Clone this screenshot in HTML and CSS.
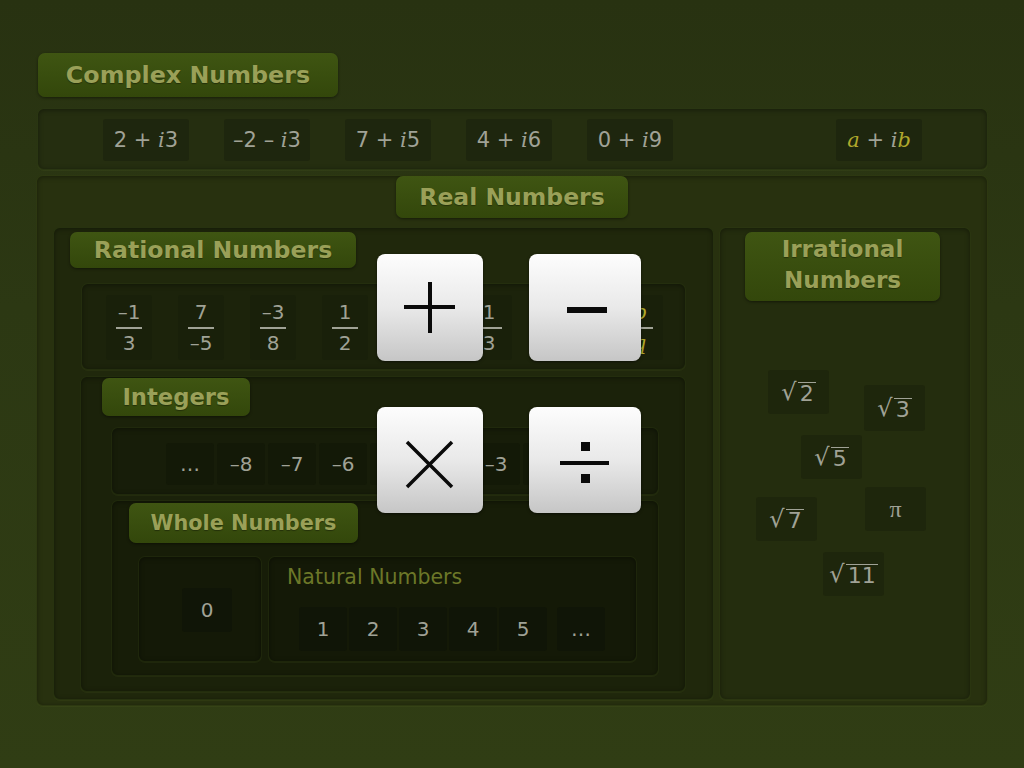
FILE: index.html
```html
<!DOCTYPE html>
<html>
<head>
<meta charset="utf-8">
<link rel="stylesheet" href="styles.css">
</head>
<body>
<div class="page">
  <div class="label label-complex">Complex Numbers</div>
  <div class="panel complex-row">
    <div class="cx">2 + <i>i</i>3</div>
    <div class="cx">–2 – <i>i</i>3</div>
    <div class="cx">7 + <i>i</i>5</div>
    <div class="cx">4 + <i>i</i>6</div>
    <div class="cx">0 + <i>i</i>9</div>
    <div class="cx cx-general"><i class="y">a</i> + <i>i</i><i class="y">b</i></div>
  </div>

  <div class="panel real">
    <div class="label label-real">Real Numbers</div>
    <div class="real-body">
      <div class="panel rational">
        <div class="label label-rational">Rational Numbers</div>
        <div class="panel frac-row">
          <div class="frac"><span>–1</span><b></b><span>3</span></div>
          <div class="frac"><span>7</span><b></b><span>–5</span></div>
          <div class="frac"><span>–3</span><b></b><span>8</span></div>
          <div class="frac"><span>1</span><b></b><span>2</span></div>
          <div class="frac"><span>5</span><b></b><span>4</span></div>
          <div class="frac"><span>1</span><b></b><span>3</span></div>
          <div class="frac"><span>2</span><b></b><span>7</span></div>
          <div class="frac frac-general"><span><i>p</i></span><b></b><span><i>q</i></span></div>
        </div>
        <div class="panel integers">
          <div class="label label-int">Integers</div>
          <div class="panel int-row">
            <div class="num">…</div>
            <div class="num">–8</div>
            <div class="num">–7</div>
            <div class="num">–6</div>
            <div class="num">–5</div>
            <div class="num">–4</div>
            <div class="num">–3</div>
            <div class="num">–2</div>
            <div class="num">–1</div>
          </div>
          <div class="panel whole">
            <div class="label label-whole">Whole Numbers</div>
            <div class="whole-body">
              <div class="panel zero-panel">
                <div class="num num-zero">0</div>
              </div>
              <div class="panel natural">
                <div class="natural-label">Natural Numbers</div>
                <div class="nat-row">
                  <div class="num">1</div>
                  <div class="num">2</div>
                  <div class="num">3</div>
                  <div class="num">4</div>
                  <div class="num">5</div>
                  <div class="num nat-more">…</div>
                </div>
              </div>
            </div>
          </div>
        </div>
      </div>
      <div class="panel irrational">
        <div class="label label-irr">Irrational<br>Numbers</div>
        <div class="irr i1"><span class="rad">√</span><span class="over">2</span></div>
        <div class="irr i2"><span class="rad">√</span><span class="over">3</span></div>
        <div class="irr i3"><span class="rad">√</span><span class="over">5</span></div>
        <div class="irr i4"><span class="rad">√</span><span class="over">7</span></div>
        <div class="irr i5"><span class="pi">π</span></div>
        <div class="irr i6"><span class="rad">√</span><span class="over">11</span></div>
      </div>
    </div>
  </div>

  <div class="op op-plus"><svg viewBox="0 0 106 107"><path d="M27 53 H78 M53 28 V79" /></svg></div>
  <div class="op op-minus"><svg viewBox="0 0 112 107"><path d="M38 56 H78" class="thick"/></svg></div>
  <div class="op op-times"><svg viewBox="0 0 106 106"><path d="M30 35 L75 80 M75 35 L30 80" class="thin"/></svg></div>
  <div class="op op-div"><svg viewBox="0 0 112 106"><path d="M31 56 H80" /><rect x="52" y="35" width="9" height="9"/><rect x="52" y="67" width="9" height="9"/></svg></div>
</div>
</body>
</html>
```

FILE: styles.css
```css
* { box-sizing: border-box; }
html, body { margin: 0; padding: 0; }
body {
  width: 1024px;
  height: 768px;
  overflow: hidden;
  background: linear-gradient(#283211, #2c3813 40%, #303d14);
  font-family: "DejaVu Sans", "Liberation Sans", sans-serif;
  color: #a0a296;
}
.page {
  position: relative;
  height: 768px;
  padding: 53px 0 0 36px;
}
.panel {
  border-radius: 7px;
  border: 1px solid rgba(60, 78, 24, 0.25);
  box-shadow: inset 0 1px 5px rgba(0, 0, 0, 0.4), 0 1px 0 rgba(110, 130, 50, 0.1);
}
.label {
  border-radius: 7px;
  background: linear-gradient(#3f5512, #33470b);
  box-shadow: 0 1px 3px rgba(0, 0, 0, 0.45);
  color: #9aa058;
  font-weight: bold;
  font-size: 22px;
  display: flex;
  align-items: center;
  justify-content: center;
  text-shadow: 0 1px 1px rgba(0,0,0,0.35);
  white-space: nowrap;
}
.label-complex { margin-left: 2px; width: 300px; height: 44px; font-size: 23.8px; }
.complex-row {
  margin-top: 11px;
  width: 951px;
  margin-left: 1px;
  height: 62px;
  background: #252e10;
  display: flex;
  align-items: center;
  gap: 35px;
  padding: 2px 65px 0 65px;
}
.cx {
  width: 86px;
  height: 42px;
  background: #1e260e;
  border-radius: 3px;
  display: flex;
  align-items: center;
  justify-content: center;
  font-size: 21px;
  color: #a0a296;
  white-space: pre;
}
.cx i, .frac i { font-family: "DejaVu Serif", serif; font-style: italic; }
.cx-general { margin-left: auto; }
.y { color: #b0a82c; }

.real {
  margin-top: 5px;
  width: 952px;
  height: 531px;
  background: #28310f;
}
.label-real { margin: 0 auto; width: 232px; height: 42px; font-size: 23.5px; }
.real-body {
  display: flex;
  gap: 5px;
  padding: 9px 16px 0 16px;
}
.rational {
  width: 661px;
  height: 473px;
  background: #20280c;
  padding-top: 4px;
}
.label-rational { margin-left: 16px; width: 286px; height: 36px; font-size: 23.6px; }
.frac-row {
  margin: 15px 27px 0 27px;
  height: 87px;
  background: #1c230b;
  display: flex;
  gap: 26px;
  padding: 11px 0 0 24px;
}
.frac {
  width: 46px;
  height: 65px;
  background: #19200a;
  border-radius: 3px;
  display: flex;
  flex-direction: column;
  align-items: center;
  justify-content: center;
  font-size: 20px;
  line-height: 22px;
  color: #a0a296;
}
.frac b {
  display: block;
  width: 26px;
  height: 2px;
  background: #a0a296;
  margin: 4px 0 3px;
}
.frac-general { color: #b0a82c; margin-left: 7px; }

.integers {
  margin: 6px 27px 0 26px;
  height: 316px;
  background: #1b220a;
  padding-top: 1px;
}
.label-int { margin-left: 21px; width: 148px; height: 38px; font-size: 22.7px; }
.int-row {
  margin: 11px 26px 0 30px;
  height: 68px;
  background: #171d09;
  display: flex;
  gap: 3px;
  padding: 15px 0 0 54px;
}
.num {
  width: 48px;
  height: 42px;
  background: #131907;
  border-radius: 3px;
  display: flex;
  align-items: center;
  justify-content: center;
  font-size: 20px;
  color: #a0a296;
}
.whole {
  margin: 5px 26px 0 30px;
  height: 176px;
  background: #171d08;
  padding-top: 2px;
}
.label-whole { margin-left: 17px; width: 229px; height: 40px; font-size: 20.8px; }
.whole-body {
  display: flex;
  gap: 6px;
  margin-top: 13px;
  padding-left: 26px;
}
.zero-panel {
  width: 124px;
  height: 106px;
  background: #141907;
  padding: 31px 0 0 43px;
}
.num-zero { width: 50px; height: 44px; background: #101507; }
.natural {
  width: 369px;
  height: 106px;
  background: #141907;
  padding: 8px 0 0 18px;
}
.natural-label {
  font-size: 20.5px;
  color: #6c7728;
  height: 31px;
}
.nat-row {
  display: flex;
  gap: 2px;
  margin-top: 11px;
  padding-left: 12px;
}
.nat-row .num { height: 44px; background: #101507; }
.nat-more { margin-left: 8px; }

.irrational {
  position: relative;
  width: 252px;
  height: 473px;
  background: #242d0e;
  padding: 4px 0 0 25px;
}
.label-irr {
  width: 195px;
  height: 69px;
  line-height: 31px;
  text-align: center;
  padding-bottom: 4px;
  font-size: 23.1px;
}
.irr {
  position: absolute;
  width: 61px;
  height: 44px;
  background: #1e260c;
  border-radius: 3px;
  display: flex;
  align-items: center;
  justify-content: center;
  font-size: 22px;
  color: #a0a296;
}
.rad { font-size: 24px; margin-right: 1px; }
.over { border-top: 1.5px solid #a0a296; padding: 0 2px; line-height: 22px; margin-top: 2px; }
.pi { font-family: "Liberation Serif", serif; font-size: 24px; }
.i1 { left: 48px; top: 142px; }
.i2 { left: 144px; top: 157px; height: 46px; }
.i3 { left: 81px; top: 207px; }
.i4 { left: 36px; top: 269px; }
.i5 { left: 145px; top: 259px; }
.i6 { left: 103px; top: 324px; }

.op {
  position: absolute;
  border-radius: 8px;
  background: linear-gradient(#fdfdfd, #e9e9e9 50%, #c6c6c6);
  box-shadow: 0 1px 3px rgba(0,0,0,0.5);
}
.op svg { display: block; width: 100%; height: 100%; }
.op path { stroke: #0a0a0a; stroke-width: 4; fill: none; filter: blur(0.4px); }
.op path.thick { stroke-width: 6; }
.op path.thin { stroke-width: 3.5; }
.op rect { fill: #0a0a0a; }
.op-plus { left: 377px; top: 254px; width: 106px; height: 107px; }
.op-minus { left: 529px; top: 254px; width: 112px; height: 107px; }
.op-times { left: 377px; top: 407px; width: 106px; height: 106px; }
.op-div { left: 529px; top: 407px; width: 112px; height: 106px; }
```
